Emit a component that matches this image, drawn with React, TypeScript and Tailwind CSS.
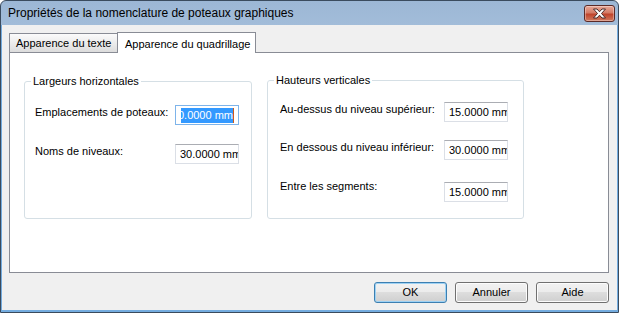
import React from "react";

const dlgFont = { fontFamily: '"Liberation Sans", Arial, sans-serif' };

function Field({ value }: { value: string }) {
  return (
    <div className="w-[64px] h-[20px] bg-white border border-[#dbdfe6] border-t-[#abadb3] pl-[4px] pr-[1px] flex items-center overflow-hidden">
      <span className="whitespace-nowrap text-[11px] leading-[13px] text-black">{value}</span>
    </div>
  );
}

function FocusedField() {
  return (
    <div className="w-[64px] h-[20px] bg-white border border-[#7eb4ea] pl-[5px] pr-[4px] flex items-center">
      <div className="flex-1 h-[15px] overflow-hidden flex justify-end items-stretch">
        <span className="whitespace-nowrap shrink-0 bg-[#3399ff] text-white text-[11px] leading-[15px]">30.0000 mm</span>
        <span className="shrink-0 w-[1px] bg-[#cc5a1a]" />
      </div>
    </div>
  );
}

function Btn({ label, def }: { label: string; def?: boolean }) {
  return (
    <div
      className={
        "w-[73px] h-[21px] rounded-[3px] border flex items-center justify-center text-[11px] text-black bg-[linear-gradient(#f2f2f2_0%,#ebebeb_50%,#dddddd_50%,#cfcfcf_100%)] " +
        (def ? "border-[#3c7fb1] shadow-[inset_0_0_0_1px_#9ed2f4]" : "border-[#707070] shadow-[inset_0_0_0_1px_#fcfcfc]")
      }
    >
      {label}
    </div>
  );
}

export default function App() {
  return (
    <div className="w-[619px] h-[313px] bg-white" style={dlgFont}>
      <div className="w-[619px] h-[313px] rounded-t-[6px] border border-[#3a4b5e] bg-[linear-gradient(#9cb7d5,#bcd3ea_40%,#c3d8ed)] flex flex-col overflow-hidden">
        {/* Title bar */}
        <div className="h-[24px] shrink-0 flex items-start justify-between pl-[7px] pr-[3px]">
          <div className="pt-[5px] text-[12px] leading-[15px] text-black">
            Propriétés de la nomenclature de poteaux graphiques
          </div>
          <div className="mt-[4px] w-[31px] h-[17px] rounded-[3px] border border-[#5b2a27] bg-[linear-gradient(#e8a898,#d47b66_45%,#c0442c_55%,#d07a5f)] flex items-center justify-center shadow-[inset_0_0_0_1px_rgba(255,255,255,0.35)]">
            <svg width="15" height="11" viewBox="0 0 15 11">
              <path
                d="M1.5 1 L5 1 L7.5 3.8 L10 1 L13.5 1 L9.5 5.5 L13.5 10 L10 10 L7.5 7.2 L5 10 L1.5 10 L5.5 5.5 Z"
                fill="#ffffff"
                stroke="#4a2a28"
                strokeWidth="1"
                strokeLinejoin="round"
              />
            </svg>
          </div>
        </div>
        {/* Client area */}
        <div className="flex-1 bg-[#f0f0f0] border-x border-b-[2px] border-[#74acdf] flex flex-col pl-[7px] pr-[7px]">
          {/* Tabs */}
          <div className="h-[27px] shrink-0 flex items-end pt-[7px] relative z-10">
            <div className="w-[109px] h-[19px] border border-b-0 border-[#898c95] bg-[linear-gradient(#fbfbfb,#ececec_50%,#dcdcdc)] pl-[6px] flex items-center text-[11px] text-black">
              <span className="mt-[1px]">Apparence du texte</span>
            </div>
            <div className="-ml-px w-[139px] h-[21px] mb-[-1px] border border-b-0 border-[#898c95] bg-white pl-[7px] flex items-start text-[11px] text-black">
              <span className="mt-[3px]">Apparence du quadrillage</span>
            </div>
          </div>
          {/* Panel */}
          <div className="w-[600px] h-[221px] shrink-0 bg-white border border-[#898c95] pl-[14px] pt-[21px] flex items-start gap-[15px]">
            {/* Group 1 */}
            <div className="relative mt-[7px] w-[228px] h-[138px] rounded-[3px] border border-[#d5dfe5] pl-[10px] pr-[12px] pt-[23px]">
              <span className="absolute -top-[7px] left-[6px] bg-white px-[2px] text-[11px] leading-[13px] text-black">Largeurs horizontales</span>
              <div className="flex items-start justify-between">
                <span className="text-[11px] leading-[13px] text-black mt-[1px]">Emplacements de poteaux:</span>
                <FocusedField />
              </div>
              <div className="flex items-start justify-between mt-[19px]">
                <span className="text-[11px] leading-[13px] text-black mt-[1px]">Noms de niveaux:</span>
                <Field value="30.0000 mm" />
              </div>
            </div>
            {/* Group 2 */}
            <div className="relative mt-[6px] w-[257px] h-[139px] rounded-[3px] border border-[#d5dfe5] pl-[12px] pr-[15px] pt-[21px]">
              <span className="absolute -top-[7px] left-[6px] bg-white px-[2px] text-[11px] leading-[13px] text-black">Hauteurs verticales</span>
              <div className="flex items-start justify-between">
                <span className="text-[11px] leading-[13px] text-black mt-[1px]">Au-dessus du niveau supérieur:</span>
                <Field value="15.0000 mm" />
              </div>
              <div className="flex items-start justify-between mt-[18px]">
                <span className="text-[11px] leading-[13px] text-black mt-[1px]">En dessous du niveau inférieur:</span>
                <Field value="30.0000 mm" />
              </div>
              <div className="flex items-start justify-between mt-[22px]">
                <span className="text-[11px] leading-[13px] text-black -mt-[2px]">Entre les segments:</span>
                <Field value="15.0000 mm" />
              </div>
            </div>
          </div>
          {/* Buttons */}
          <div className="flex justify-end gap-[8px] mt-[9px] pr-[1px]">
            <Btn label="OK" def />
            <Btn label="Annuler" />
            <Btn label="Aide" />
          </div>
        </div>
      </div>
    </div>
  );
}
